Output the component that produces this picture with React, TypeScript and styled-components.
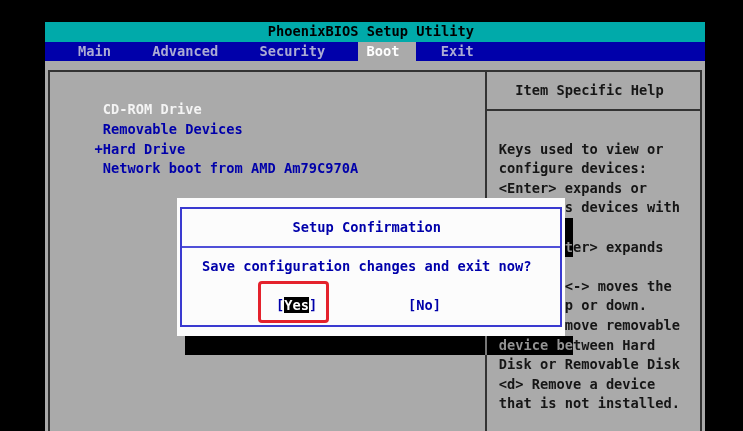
import styled, { createGlobalStyle } from "styled-components";

// text-mode cell size: the BIOS screen is an 80x25 grid
const CW = 8.25;
const RH = 19.6;

const GlobalStyle = createGlobalStyle`
  html, body {
    margin: 0;
    padding: 0;
    background: #000;
  }
  *, *::before, *::after {
    box-sizing: border-box;
  }
`;

const menu = ["Main", "Advanced", "Security", "Boot", "Exit"];

const bootItems = [
  { label: "CD-ROM Drive", current: true },
  { label: "Removable Devices" },
  { label: "Hard Drive", expandable: true },
  { label: "Network boot from AMD Am79C970A" },
];

const helpLines = [
  "Keys used to view or",
  "configure devices:",
  "<Enter> expands or",
  "collapses devices with",
  "a + or -",
  "<Ctrl+Enter> expands",
  "all",
  "<+> and <-> moves the",
  "device up or down.",
  "<n> May move removable",
  "device between Hard",
  "Disk or Removable Disk",
  "<d> Remove a device",
  "that is not installed.",
];

function App() {
  return (
    <Page>
      <GlobalStyle />
      <Screen>
        <TitleBar>PhoenixBIOS Setup Utility</TitleBar>
        <MenuBar>
          {menu.map((m) => (
            <MenuItem key={m} $active={m === "Boot"}>
              {m}
            </MenuItem>
          ))}
        </MenuBar>
        <Body>
          <Frame>
            <BootList>
              {bootItems.map((item) => (
                <BootItem key={item.label} $current={item.current}>
                  {(item.expandable ? "+" : " ") + item.label}
                </BootItem>
              ))}
            </BootList>
            <HelpPanel>
              <HelpHeader>Item Specific Help</HelpHeader>
              <HelpBody>
                {helpLines.map((line, i) => (
                  <div key={i}>{line}</div>
                ))}
              </HelpBody>
            </HelpPanel>
          </Frame>
        </Body>

        <Dialog>
          <DialogFrame>
            <DialogTitle>Setup Confirmation</DialogTitle>
            <DialogBody>
              <Message>Save configuration changes and exit now?</Message>
              <Message> </Message>
              <Choices>
                <Choice $marked>
                  [<Selected>Yes</Selected>]
                </Choice>
                <Choice>[No]</Choice>
              </Choices>
            </DialogBody>
          </DialogFrame>
        </Dialog>
        <Shadow $col={63} $row={10} $cols={1} $rows={2} />
        <Shadow $col={17} $row={16} $cols={47} $rows={1} />
      </Screen>
    </Page>
  );
}

export default App;

const Page = styled.div`
  width: 743px;
  height: 431px;
  overflow: hidden;
  background: #000;
  padding: 22px 0 0 45px;
`;

const Screen = styled.div`
  position: relative;
  width: ${80 * CW}px;
  height: ${25 * RH}px;
  display: flex;
  flex-direction: column;
  font-family: "DejaVu Sans Mono", "Liberation Mono", monospace;
  font-size: 13.7px;
  font-weight: bold;
  line-height: ${RH}px;
  white-space: pre;
`;

const TitleBar = styled.div`
  height: ${RH}px;
  display: flex;
  justify-content: center;
  padding-right: ${CW}px;
  background: #00aaaa;
  color: #000;
`;

const MenuBar = styled.div`
  height: ${RH}px;
  display: flex;
  gap: ${2 * CW}px;
  padding-left: ${3 * CW}px;
  background: #0000aa;
`;

const MenuItem = styled.div<{ $active?: boolean }>`
  padding: 0 ${2 * CW}px 0 ${CW}px;
  color: ${(p) => (p.$active ? "#ffffff" : "#acacd4")};
  background: ${(p) => (p.$active ? "#aaaaaa" : "transparent")};
`;

const Body = styled.div`
  flex: 1;
  display: flex;
  padding: ${RH / 2 - 1}px ${CW / 2 - 1}px 0;
  background: #aaaaaa;
`;

const Frame = styled.div`
  flex: 1;
  display: grid;
  grid-template-columns: ${53.5 * CW + 1 - (CW / 2 + 1)}px 1fr;
  border: 2px solid #333;
  border-bottom: none;
`;

const BootList = styled.div`
  padding: ${2 * RH - (RH / 2 + 1)}px 0 0 ${6 * CW - (CW / 2 + 1)}px;
  border-right: 2px solid #333;
`;

const BootItem = styled.div<{ $current?: boolean }>`
  color: ${(p) => (p.$current ? "#f4f4f4" : "#0000aa")};
`;

const HelpPanel = styled.div`
  display: flex;
  flex-direction: column;
`;

const HelpHeader = styled.div`
  height: ${2 * RH}px;
  display: flex;
  align-items: center;
  justify-content: center;
  padding-right: ${CW}px;
  border-bottom: 2px solid #333;
  color: #161616;
`;

const HelpBody = styled.div`
  padding: ${1.5 * RH - 1}px 0 0 ${1.5 * CW - 1}px;
  color: #161616;
`;

const Dialog = styled.div`
  position: absolute;
  left: ${16 * CW}px;
  top: ${9 * RH}px;
  width: ${47 * CW}px;
  height: ${7 * RH}px;
  padding: ${RH / 2 - 1}px ${CW / 2 - 1}px;
  background: #fcfcfc;
  color: #0000aa;
`;

const DialogFrame = styled.div`
  height: 100%;
  display: flex;
  flex-direction: column;
  border: 2px solid #3a3ad0;
`;

const DialogTitle = styled.div`
  height: ${2 * RH}px;
  display: flex;
  align-items: center;
  justify-content: center;
  padding-right: ${CW}px;
  border-bottom: 2px solid #5050d8;
`;

const DialogBody = styled.div`
  padding-top: ${RH / 2 - 1}px;
`;

const Message = styled.div`
  height: ${RH}px;
  text-align: center;
  padding-right: ${CW}px;
`;

const Choices = styled.div`
  display: flex;
  gap: ${11 * CW}px;
  padding-left: ${11.5 * CW - 1}px;
`;

const Choice = styled.div<{ $marked?: boolean }>`
  position: relative;
  &::after {
    content: "";
    display: ${(p) => (p.$marked ? "block" : "none")};
    position: absolute;
    left: -18px;
    top: -15px;
    width: 71px;
    height: 42px;
    border: 3px solid #e4222c;
    border-radius: 4px;
  }
`;

const Selected = styled.span`
  background: #000;
  color: #fff;
`;

// drop shadow of the dialog: darkens the cells under it
const Shadow = styled.div<{ $col: number; $row: number; $cols: number; $rows: number }>`
  position: absolute;
  left: ${(p) => p.$col * CW}px;
  top: ${(p) => p.$row * RH}px;
  width: ${(p) => p.$cols * CW}px;
  height: ${(p) => p.$rows * RH}px;
  background: #aaaaaa;
  mix-blend-mode: difference;
`;
